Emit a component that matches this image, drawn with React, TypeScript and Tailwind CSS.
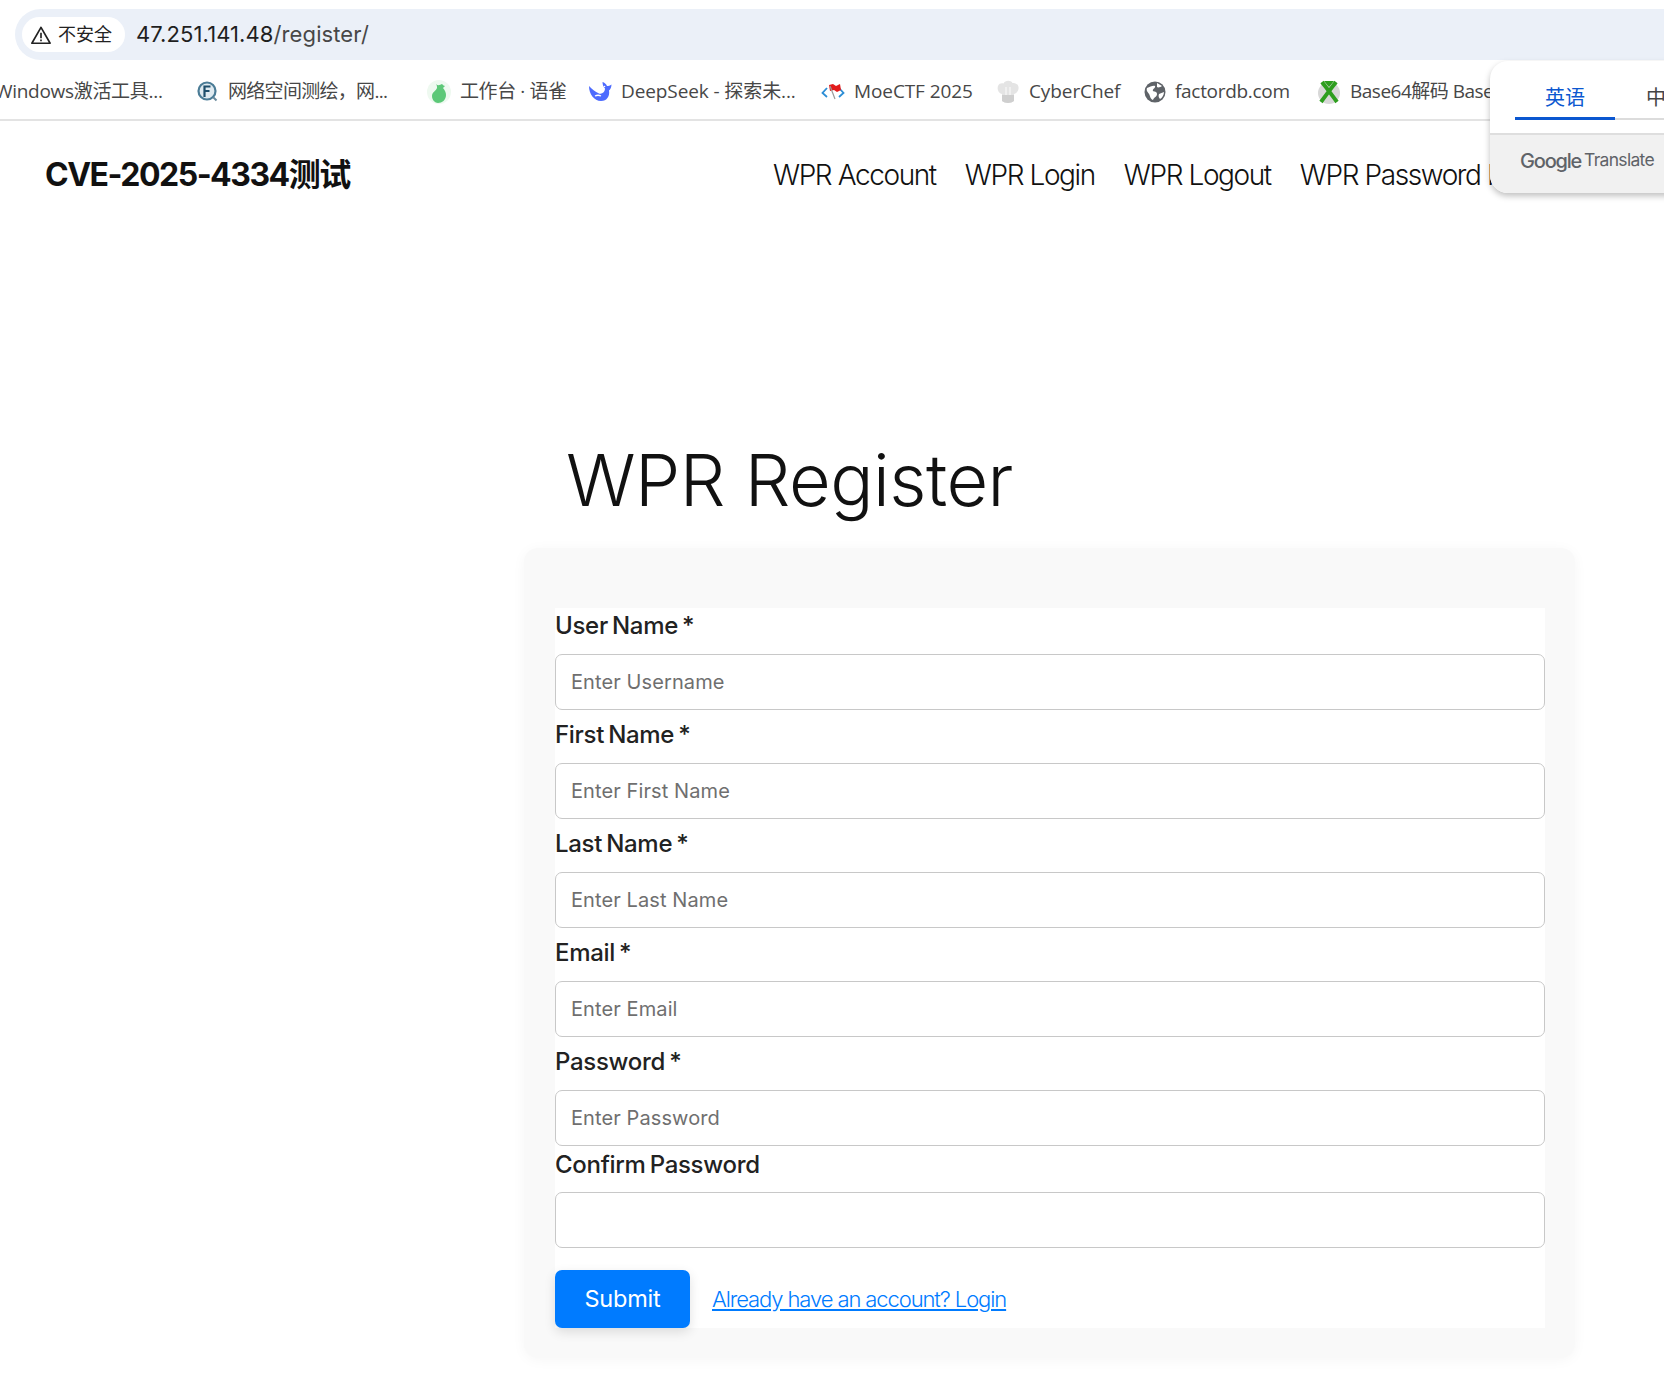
const sans = { fontFamily: 'Inter, "Noto Sans CJK SC", sans-serif' };
const ui = { fontFamily: '"Open Sans", "Noto Sans CJK SC", sans-serif' };

function Feng() {
  return (
    <svg width="22" height="22" viewBox="0 0 22 22">
      <circle cx="10" cy="10" r="8.500" fill="#dfeaf0" stroke="#4b7c96" strokeWidth="2.200" />
      <path d="M7.500 16V5.500h6M7.500 10h5" fill="none" stroke="#1f4f6c" strokeWidth="2.200" />
      <path d="M16.500 16.500l3 3" stroke="#6a8a9c" strokeWidth="2" />
    </svg>
  );
}
function Yuque() {
  return (
    <svg width="24" height="26" viewBox="0 0 24 26">
      <circle cx="12" cy="13" r="12" fill="#eef9f0" />
      <path d="M9 5c2 2 4 1 6 0 1 1 2 2 3 2l-2 2c2 2 3 5 3 7 0 5-4 8-8 8-3 0-6-3-6-7 0-4 4-5 5-8 0-1 0-3-1-4z" fill="#5cc878" />
    </svg>
  );
}
function Whale() {
  return (
    <svg width="24" height="22" viewBox="0 0 24 22">
      <path d="M1 5C1 13 6 20 13 20C19 20 22 15 21 9.500C22.500 8.500 23.500 6 23.500 3.500C22 5 20.500 5 19 5C18 3 16.500 1.500 14.500 1C14.500 4 15.500 6 17 7.500C17 11 14 13.500 11 12.500C7 11 4 8 1 5z" fill="#4d6bfe" />
      <path d="M7 15c2-1 4-1 6 0" stroke="#fff" strokeWidth="1.300" fill="none" />
      <circle cx="16.500" cy="5.500" r="0.800" fill="#fff" />
    </svg>
  );
}
function Moe() {
  return (
    <svg width="24" height="20" viewBox="0 0 24 20">
      <path d="M6 6L1.500 11L6 15M18 6L22.500 11L18 15" fill="none" stroke="#2c8ed6" strokeWidth="1.800" />
      <path d="M8 3l4-1 3 2 4-2 1 6-4 2-3-2-4 1z" fill="#e21b1b" />
      <path d="M9 4l5 13" stroke="#9a9a9a" strokeWidth="1.200" />
    </svg>
  );
}
function Chef() {
  return (
    <svg width="24" height="26" viewBox="0 0 24 26">
      <path d="M6 15C2 14 1 10 2 7C3 4 6 4 7.500 4.500C9 1 15 1 16.500 4C19 3.500 22 5 22.500 8C23 11 21 14 18 15V22C15 24.500 9 24.500 6 22z" fill="#e4e4e4" />
      <path d="M6 16h12v6C15 24.500 9 24.500 6 22z" fill="#cfcfcf" />
      <path d="M10 8v8M14 8v8" stroke="#f3f3f3" strokeWidth="1.500" />
    </svg>
  );
}
function Globe() {
  return (
    <svg width="22" height="22" viewBox="0 0 22 22">
      <circle cx="11" cy="11" r="10.500" fill="#5f6368" />
      <path d="M3 7c3-1 6-3 8-2 1 2-3 3-2 5 1 1 4 0 4 3s-3 3-4 6c-3-1-3-5-4-6-1-2-3-3-2-6zM15 13l5-2c0 3-2 6-4 7-1-1-2-3-1-5zM13 2l5 3c-1 1-4 2-5 1z" fill="#fff" />
    </svg>
  );
}
function Xbox() {
  return (
    <svg width="24" height="26" viewBox="0 0 24 26">
      <circle cx="12" cy="14" r="11" fill="#d8d8d8" />
      <path d="M5 3C8 7 15 16 20 23M19 3C16 7 9 16 4 23" fill="none" stroke="#2e9e1f" strokeWidth="4" />
      <path d="M7 2h10l-5 6z" fill="#2e9e1f" />
    </svg>
  );
}

const bookmarks = [
  { icon: <Feng />, label: '网络空间测绘，网...', w: 'w-[230px]', t: 'tracking-[-0.7px]' },
  { icon: <Yuque />, label: '工作台 · 语雀', w: 'w-[161px]', t: 'tracking-[-0.4px]' },
  { icon: <Whale />, label: 'DeepSeek - 探索未...', w: 'w-[233px]', t: 'tracking-[-0.1px]' },
  { icon: <Moe />, label: 'MoeCTF 2025', w: 'w-[175px]', t: 'tracking-[-0.1px]' },
  { icon: <Chef />, label: 'CyberChef', w: 'w-[148px]', t: 'tracking-[-0.1px]' },
  { icon: <Globe />, label: 'factordb.com', w: 'w-[173px]', t: 'tracking-[-0.3px]' },
  { icon: <Xbox />, label: 'Base64解码 Base64编码', w: 'w-[260px]', t: 'tracking-[-0.5px]' },
];

const fields = [
  { label: 'User Name *', ph: 'Enter Username' },
  { label: 'First Name *', ph: 'Enter First Name' },
  { label: 'Last Name *', ph: 'Enter Last Name' },
  { label: 'Email *', ph: 'Enter Email' },
  { label: 'Password *', ph: 'Enter Password' },
];

export default function App() {
  return (
    <div className="relative h-[1389px] w-[1664px] overflow-hidden bg-white text-[#111]" style={sans}>
      {/* Browser chrome */}
      <div className="h-[121px] border-b-2 border-[#e3e3e3] pt-[9px]">
        <div className="ml-[15px] flex h-[51px] items-center rounded-l-[26px] bg-[#ebf0f8] pl-[7px]">
          <div className="flex h-[35px] w-[103px] items-center justify-center gap-[6px] rounded-full bg-white pr-[5px]">
            <svg width="22" height="20" viewBox="0 0 20 18" fill="none" stroke="#222" strokeWidth="1.500">
              <path d="M10 2L1.700 16.500h16.600z" strokeLinejoin="round" />
              <path d="M10 7v5M10 13.200v1.400" />
            </svg>
            <span className="text-[18px] text-[#222]">不安全</span>
          </div>
          <span className="ml-[11px] text-[22px] tracking-[0.1px] text-[#1f1f1f]">
            47.251.141.48<span className="text-[#474747]">/register/</span>
          </span>
        </div>
        <div className="mt-[1px] flex h-[59px] items-center whitespace-nowrap pt-[2px] text-[19px] text-[#474747]" style={ui}>
          <div className="ml-[-5px] w-[202px] shrink-0 tracking-[-0.3px]">Windows激活工具...</div>
          {bookmarks.map((b) => (
            <div key={b.label} className={`flex shrink-0 items-center gap-[9px] ${b.w}`}>
              {b.icon}
              <span className={b.t}>{b.label}</span>
            </div>
          ))}
        </div>
      </div>

      {/* Site header */}
      <header className="flex h-[108px] items-center whitespace-nowrap pl-[45px]">
        <div className="w-[728px] shrink-0 text-[32px] font-bold tracking-[-1.500px]">CVE-2025-4334测试</div>
        <nav className="flex gap-[29px] text-[28px] font-light tracking-[-1.400px] text-[#111]">
          <span>WPR Account</span>
          <span>WPR Login</span>
          <span>WPR Logout</span>
          <span>WPR Password Reset</span>
        </nav>
      </header>

      {/* Main */}
      <main className="ml-[524px] w-[1051px] pt-[199px]">
        <h1 className="ml-[42px] h-[120px] text-[72px] font-[350] leading-[103px] tracking-[-0.500px] text-[#111]">WPR Register</h1>
        <div className="rounded-[14px] bg-[#f9f9f9] pb-[30px] pl-[31px] pr-[30px] pt-[60px] shadow-[0_2px_14px_rgba(0,0,0,0.04)]">
          <form className="bg-white">
            {fields.map((f) => (
              <div key={f.label} className="h-[109px]">
                <label className="block h-[46px] text-[24px] font-[450] leading-[36px] tracking-[-0.3px] text-[#222] [word-spacing:-2px]">{f.label}</label>
                <input
                  placeholder={f.ph}
                  className="h-[56px] w-full rounded-[7px] border border-[#c8c8c8] bg-white px-[15px] text-[20px] tracking-[0.1px] outline-none placeholder:text-[#6f6f6f]"
                />
              </div>
            ))}
            <label className="block h-[39px] text-[24px] font-[450] leading-[24px] tracking-[-0.3px] text-[#222] [word-spacing:-2px]">Confirm Password</label>
            <input className="block h-[56px] w-full rounded-[7px] border border-[#c8c8c8] bg-white px-[15px] text-[20px] outline-none" />
            <div className="mt-[22px] flex items-center gap-[22px]">
              <button type="button" className="h-[58px] w-[135px] rounded-[7px] bg-[#007bff] text-[23.500px] font-normal tracking-[-0.2px] text-white shadow-[0_4px_12px_rgba(0,0,0,0.12)]">Submit</button>
              <a href="#" className="text-[22px] font-light tracking-[-1.100px] text-[#007bff] underline">Already have an account? Login</a>
            </div>
          </form>
        </div>
      </main>

      {/* Translate popup */}
      <div className="absolute left-[1490px] top-[61px] h-[132px] w-[200px] overflow-hidden rounded-[18px] bg-white shadow-[0_3px_6px_rgba(0,0,0,0.25)]">
        <div className="relative h-[74px] border-b-2 border-[#dedede]">
          <div className="absolute left-[25px] top-0 flex h-[59px] w-[100px] items-center justify-center border-b-[3px] border-[#0b57d0] pt-[18px] text-[20px] text-[#0b57d0]">英语</div>
          <div className="absolute left-[125px] right-0 top-[57px] border-b-2 border-[#dcdcdc]" />
          <div className="absolute left-[156px] top-[22px] text-[20px] text-[#444]">中文</div>
        </div>
        <div className="flex h-[58px] items-center gap-[3px] bg-[#f1f1f1] pb-[7px] pl-[30px] text-[#5f6368]">
          <span className="text-[20px] font-medium tracking-[-1.200px]">Google</span>
          <span className="text-[17.500px] font-normal tracking-[-0.7px]">Translate</span>
        </div>
      </div>
    </div>
  );
}
